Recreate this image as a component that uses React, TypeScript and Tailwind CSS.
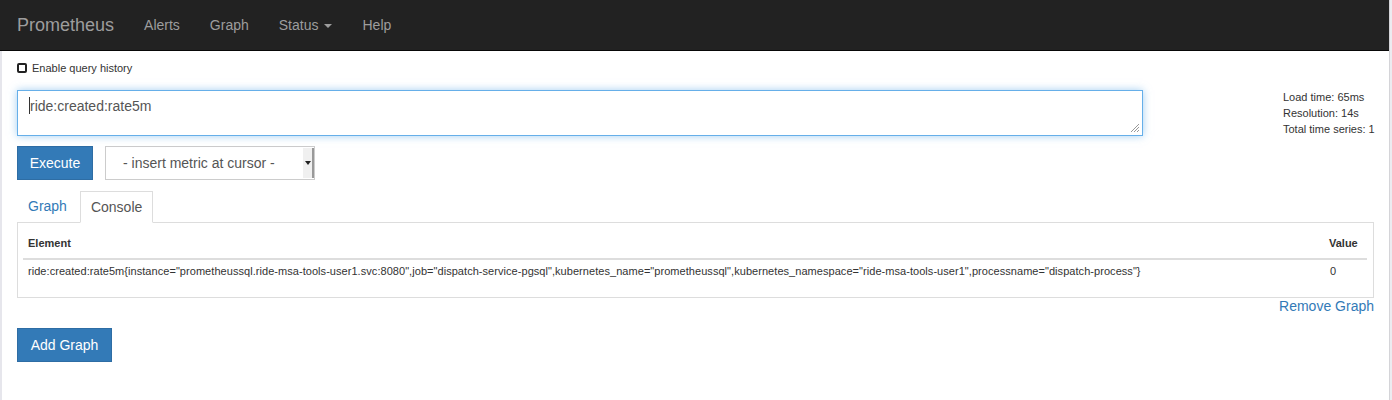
import React from 'react';

const labels =
  'ride:created:rate5m{instance="prometheussql.ride-msa-tools-user1.svc:8080",job="dispatch-service-pgsql",kubernetes_name="prometheussql",kubernetes_namespace="ride-msa-tools-user1",processname="dispatch-process"}';

function Navbar() {
  return (
    <nav className="flex h-[51px] items-stretch border-b border-[#080808] bg-[#222] pl-[2px] text-[#9d9d9d]">
      <a className="flex items-center px-[15px] text-[18px]">Prometheus</a>
      <a className="flex items-center px-[15px] text-[14px]">Alerts</a>
      <a className="flex items-center px-[15px] text-[14px]">Graph</a>
      <a className="flex items-center px-[15px] text-[14px]">
        Status
        <span className="ml-[6px] mt-[2px] h-0 w-0 border-x-[4px] border-t-[4px] border-x-transparent border-t-[#9d9d9d]" />
      </a>
      <a className="flex items-center px-[15px] text-[14px]">Help</a>
    </nav>
  );
}

function ResizeGrip() {
  return (
    <svg className="absolute bottom-[2px] right-[2px]" width="10" height="10" viewBox="0 0 10 10">
      <path d="M9 1L1 9M9 4L4 9M9 7L7 9" stroke="#999" strokeWidth="1" />
    </svg>
  );
}

export default function App() {
  return (
    <div
      className="flex min-h-[400px] w-[1392px] bg-white text-[#333]"
      style={{ fontFamily: '"Liberation Sans", Arial, sans-serif' }}
    >
      <div className="flex w-[1389px] flex-col">
        <Navbar />
        <div className="flex-1 border-l-[2px] border-[#e6e6ec] pl-[15px] pr-[15px]">
          {/* query history */}
          <div className="mt-[12px] flex h-[10px] items-center gap-[5px]">
            <span className="h-[10px] w-[10px] rounded-[2px] border-[2px] border-[#222]" />
            <span className="text-[11px] leading-[10px]">Enable query history</span>
          </div>

          {/* expression + stats */}
          <div className="mt-[17px] flex h-[46px] items-start">
            <div className="relative h-[46px] w-[1126px] shrink-0 border border-[#66afe9] px-[11px] pt-[3px] text-[14px] leading-[20px] text-[#555] shadow-[0_0_8px_rgba(102,175,233,0.6)]">
              <span className="inline-block h-[17px] w-[1px] translate-y-[3px] bg-[#333]" />
              ride:created:rate5m
              <ResizeGrip />
            </div>
            <div className="ml-[140px] mt-[-1px] whitespace-nowrap text-[11px] leading-[16px]">
              <div>Load time: 65ms</div>
              <div>Resolution: 14s</div>
              <div>Total time series: 1</div>
            </div>
          </div>

          {/* execute row */}
          <div className="mt-[10px] flex items-center gap-[12px]">
            <button className="h-[34px] w-[76px] border border-[#2e6da4] bg-[#337ab7] text-[14px] text-white">
              Execute
            </button>
            <div className="flex h-[34px] w-[210px] items-stretch border border-[#ccc] bg-white">
              <div className="flex flex-1 items-center pl-[17px] text-[14px] text-[#555]">- insert metric at cursor -</div>
              <div className="my-[1px] flex w-[11px] items-center justify-center border-r-[2px] border-[#999] bg-[#f0f0f0]">
                <span className="h-0 w-0 border-x-[3px] border-t-[4px] border-x-transparent border-t-[#222]" />
              </div>
            </div>
          </div>

          {/* tabs */}
          <div className="mt-[12px] flex h-[31px] items-end border-b border-[#ddd]">
            <a className="mr-[2px] flex h-[31px] items-center px-[11px] text-[14px] text-[#337ab7]">Graph</a>
            <a className="mb-[-1px] flex h-[32px] items-center border border-b-white border-[#ddd] bg-white px-[10px] text-[14px] text-[#555]">
              Console
            </a>
          </div>
          <div className="w-[1357px] border border-t-0 border-[#ddd] px-[5px] pb-[15px] pt-[6px]">
            <div className="mr-[1px] flex h-[31px] items-center justify-between border-b-[2px] border-[#ddd] px-[5px] text-[11px] font-bold">
              <span>Element</span>
              <span className="w-[33px]">Value</span>
            </div>
            <div className="flex h-[22px] items-center justify-between px-[5px] text-[11px]">
              <span className="tracking-[0.05px]">{labels}</span>
              <span className="w-[33px]">0</span>
            </div>
          </div>
          <div className="flex w-[1357px] justify-end">
            <a className="text-[14px] leading-[16px] text-[#337ab7]">Remove Graph</a>
          </div>

          {/* add graph */}
          <button className="mt-[14px] h-[34px] w-[95px] border border-[#2e6da4] bg-[#337ab7] text-[14px] text-white">
            Add Graph
          </button>
        </div>
      </div>
      <div className="w-[3px] border-l border-[#d4d4d8] bg-[#ececf0]" />
    </div>
  );
}
